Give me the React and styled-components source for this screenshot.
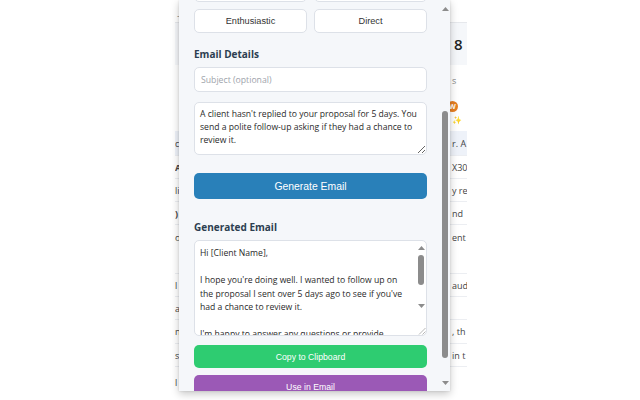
import React, { useLayoutEffect, useRef } from 'react';
import styled, { createGlobalStyle } from 'styled-components';

const GlobalStyle = createGlobalStyle`
  html, body {
    margin: 0;
    padding: 0;
    background: #ffffff;
  }
  body {
    width: 640px;
    height: 400px;
    overflow: hidden;
  }
`;

const Stage = styled.div`
  position: relative;
  width: 640px;
  height: 400px;
  background: #ffffff;
`;

// page behind the popup
const PageColumn = styled.div`
  margin-left: 175px;
  width: 292px;
  height: 400px;
  overflow: hidden;
  background: #ffffff;
  font-family: 'Open Sans', 'Liberation Sans', sans-serif;
  color: #333;
  display: flex;
  flex-direction: column;
`;

const TopBar = styled.div`
  height: 23px;
  flex-shrink: 0;
  border-bottom: 1px solid #e6e8ec;
  box-sizing: border-box;
  padding: 9px 0 0 2px;
  font-size: 9px;
  color: #888;
`;

const SummaryBand = styled.div`
  height: 42px;
  flex-shrink: 0;
  background: #f5f7fa;
  display: grid;
  grid-template-columns: 279px 1fr;
  align-items: center;
  font-size: 15px;
  font-weight: 600;
  color: #222;
  white-space: nowrap;
`;

const Row = styled.div`
  height: ${(p) => p.h}px;
  flex-shrink: 0;
  box-sizing: border-box;
  display: grid;
  grid-template-columns: 277px 1fr;
  align-items: ${(p) => (p.top ? 'start' : 'center')};
  padding-top: ${(p) => (p.top ? '6px' : '0')};
  background: ${(p) => (p.active ? '#eef2f9' : 'transparent')};
  border-bottom: ${(p) => (p.line ? '1px solid #eceef2' : 'none')};
  font-size: 9px;
  white-space: nowrap;
  color: #444;
`;

const Cell = styled.span`
  font-weight: ${(p) => (p.bold ? 700 : 400)};
  color: ${(p) => (p.muted ? '#888' : 'inherit')};
`;

const BadgeLine = styled.div`
  display: flex;
  flex-direction: column;
  gap: 2px;
`;

const Badge = styled.span`
  width: 11px;
  height: 11px;
  margin-left: -5px;
  border-radius: 50%;
  background: #e67e22;
  color: #fff;
  font-size: 7px;
  font-weight: 700;
  display: inline-flex;
  align-items: center;
  justify-content: center;
`;

const Sparkle = styled.span`
  font-size: 8px;
  color: #f3b541;
`;

// the extension popup
const Popup = styled.div`
  position: absolute;
  left: 179px;
  top: 0;
  width: 271px;
  height: 391px;
  display: flex;
  background: #f5f7fa;
  box-shadow: 0 3px 8px rgba(0, 0, 0, 0.22), 0 0 2px rgba(0, 0, 0, 0.12);
`;

const Viewport = styled.div`
  flex: 1;
  min-width: 0;
  overflow-y: scroll;
  scrollbar-width: none;
`;

const Track = styled.div`
  width: ${(p) => p.w || 10}px;
  flex-shrink: 0;
  display: flex;
  flex-direction: column;
  align-items: center;
  padding: ${(p) => p.pad || '6px 0 5px'};
  box-sizing: border-box;
  background: ${(p) => p.bg || 'transparent'};
`;

const Thumb = styled.div`
  width: 6px;
  height: ${(p) => p.h}px;
  margin-top: ${(p) => p.mt}px;
  border-radius: 3px;
  background: #8c8c8c;
  flex-shrink: 0;
`;

const Spacer = styled.div`
  flex: 1;
`;

const Arrow = ({ down }) => (
  <svg width="7" height="6" viewBox="0 0 7 6" style={{ flexShrink: 0 }}>
    <polygon points={down ? '0,1 7,1 3.5,5' : '0,5 7,5 3.5,1'} fill="#8c8c8c" />
  </svg>
);

const Grip = () => (
  <svg width="8" height="8" viewBox="0 0 8 8" style={{ flexShrink: 0, alignSelf: 'flex-end' }}>
    <line x1="7.5" y1="1" x2="1" y2="7.5" stroke="#a5a5a5" strokeWidth="0.8" />
    <line x1="7.5" y1="4.5" x2="4.5" y2="7.5" stroke="#a5a5a5" strokeWidth="0.8" />
  </svg>
);

const Content = styled.div`
  padding: 15px 13px 18px 15px;
  font-family: 'Open Sans', 'Liberation Sans', sans-serif;
`;

const Title = styled.h1`
  margin: 0 0 4px;
  font-size: 13px;
  font-weight: 700;
  color: #2c3e50;
`;

const Subtitle = styled.p`
  margin: 0 0 16px;
  font-size: 8.7px;
  color: #6b7480;
`;

const Heading = styled.h2`
  margin: 0 0 6px;
  font-size: 10px;
  line-height: 14px;
  font-weight: 700;
  color: #2c3e50;
`;

const Section = styled.section`
  margin-top: ${(p) => p.gap || 0}px;
`;

const ToneGrid = styled.div`
  display: grid;
  grid-template-columns: 1fr 1fr;
  gap: 7px;
`;

const ToneButton = styled.button`
  height: 24px;
  padding: 0;
  background: #ffffff;
  border: 1px solid #dde1e8;
  border-radius: 5px;
  font-family: 'Liberation Sans', Arial, sans-serif;
  font-size: 9.2px;
  color: #333;
`;

const Input = styled.input`
  display: block;
  box-sizing: border-box;
  width: 100%;
  height: 25px;
  margin: 0;
  padding: 0 6px;
  border: 1px solid #dde1e8;
  border-radius: 5px;
  background: #fff;
  font-family: 'Open Sans', sans-serif;
  font-size: 8.7px;
  color: #333;
  outline: none;

  &::placeholder {
    color: #9ea4ab;
  }
`;

const PromptArea = styled.textarea`
  display: block;
  box-sizing: border-box;
  width: 100%;
  height: 53px;
  margin: 10px 0 0;
  padding: 5px;
  border: 1px solid #dde1e8;
  border-radius: 5px;
  background: #fff;
  font-family: 'Open Sans', sans-serif;
  font-size: 8.65px;
  line-height: 13px;
  color: #2a2a2a;
  outline: none;
  resize: vertical;
`;

const OutputBox = styled.div`
  display: flex;
  height: 96px;
  box-sizing: border-box;
  border: 1px solid #dde1e8;
  border-radius: 5px;
  background: #fff;
  overflow: hidden;
`;

const OutputText = styled.textarea`
  flex: 1;
  min-width: 0;
  margin: 0;
  padding: 6px 7px 5px 5px;
  border: none;
  background: transparent;
  font-family: 'Open Sans', sans-serif;
  font-size: 8.65px;
  line-height: 13.5px;
  color: #2a2a2a;
  outline: none;
  resize: none;
  overflow: hidden;
`;

const ActionButton = styled.button`
  display: block;
  width: 100%;
  height: ${(p) => p.h || 23}px;
  margin-top: ${(p) => p.mt || 0}px;
  padding: 0;
  border: none;
  border-radius: 5px;
  background: ${(p) => p.bg};
  color: #ffffff;
  font-family: 'Liberation Sans', Arial, sans-serif;
  font-size: ${(p) => p.fs || 8.7}px;
`;

const pageRows = [
  { h: 36, left: '', right: '', badge: true },
  { h: 25, left: 'c', right: 'r. A', active: true, line: true },
  { h: 23, left: 'A', right: 'X30', bold: true, line: true },
  { h: 23, left: 'li', right: 'y re', line: true },
  { h: 23, left: ')', right: 'nd', bold: true, line: true },
  { h: 49, left: 'o', right: 'ent', line: true, top: true },
  { h: 23, left: 'l', right: 'aud', line: true },
  { h: 23, left: 'a', right: '', line: true },
  { h: 24, left: 'n', right: ', th', line: true },
  { h: 23, left: 's', right: 'in t', line: true },
  { h: 30, left: 'l', right: '' },
];

const generated = `Hi [Client Name],

I hope you're doing well. I wanted to follow up on the proposal I sent over 5 days ago to see if you've had a chance to review it.

I'm happy to answer any questions or provide additional details that might help with your decision.

Looking forward to hearing from you.

Best regards,
[Your Name]`;

const App = () => {
  const scrollerRef = useRef(null);
  const rowRef = useRef(null);

  useLayoutEffect(() => {
    const scroller = scrollerRef.current;
    const row = rowRef.current;
    if (scroller && row) {
      scroller.scrollTop =
        row.getBoundingClientRect().top - scroller.getBoundingClientRect().top - 9;
    }
  }, []);

  return (
    <Stage>
      <GlobalStyle />
      <PageColumn>
        <TopBar>–</TopBar>
        <SummaryBand>
          <span />
          <span>8</span>
        </SummaryBand>
        <Row h={30}>
          <Cell />
          <Cell muted>s</Cell>
        </Row>
        {pageRows.map((r, i) => (
          <Row key={i} h={r.h} active={r.active} line={r.line} top={r.top}>
            <Cell bold={r.bold}>{r.left}</Cell>
            {r.badge ? (
              <BadgeLine>
                <Badge>W</Badge>
                <Sparkle>✨</Sparkle>
              </BadgeLine>
            ) : (
              <Cell>{r.right}</Cell>
            )}
          </Row>
        ))}
      </PageColumn>

      <Popup>
        <Viewport ref={scrollerRef}>
          <Content>
            <Title>AI Email Writer</Title>
            <Subtitle>Write better emails in seconds</Subtitle>

            <Heading>Select Tone</Heading>
            <ToneGrid>
              <ToneButton>Professional</ToneButton>
              <ToneButton>Friendly</ToneButton>
              <ToneButton>Formal</ToneButton>
              <ToneButton>Casual</ToneButton>
              <ToneButton ref={rowRef}>Enthusiastic</ToneButton>
              <ToneButton>Direct</ToneButton>
            </ToneGrid>

            <Section gap={14}>
              <Heading>Email Details</Heading>
              <Input placeholder="Subject (optional)" />
              <PromptArea defaultValue="A client hasn't replied to your proposal for 5 days. You send a polite follow-up asking if they had a chance to review it." />
              <ActionButton bg="#2980b9" h={26} mt={18} fs={10.4}>
                Generate Email
              </ActionButton>
            </Section>

            <Section gap={21}>
              <Heading>Generated Email</Heading>
              <OutputBox>
                <OutputText readOnly value={generated} />
                <Track pad="4px 0 0">
                  <Arrow />
                  <Thumb h={30} mt={4} />
                  <Spacer />
                  <Arrow down />
                  <Spacer />
                  <Grip />
                </Track>
              </OutputBox>
              <ActionButton bg="#2ecc71" mt={9}>
                Copy to Clipboard
              </ActionButton>
              <ActionButton bg="#9b59b6" mt={7}>
                Use in Email
              </ActionButton>
            </Section>
          </Content>
        </Viewport>
        <Track>
          <Arrow />
          <Thumb h={247} mt={99} />
          <Spacer />
          <Arrow down />
        </Track>
      </Popup>
    </Stage>
  );
};

export default App;
